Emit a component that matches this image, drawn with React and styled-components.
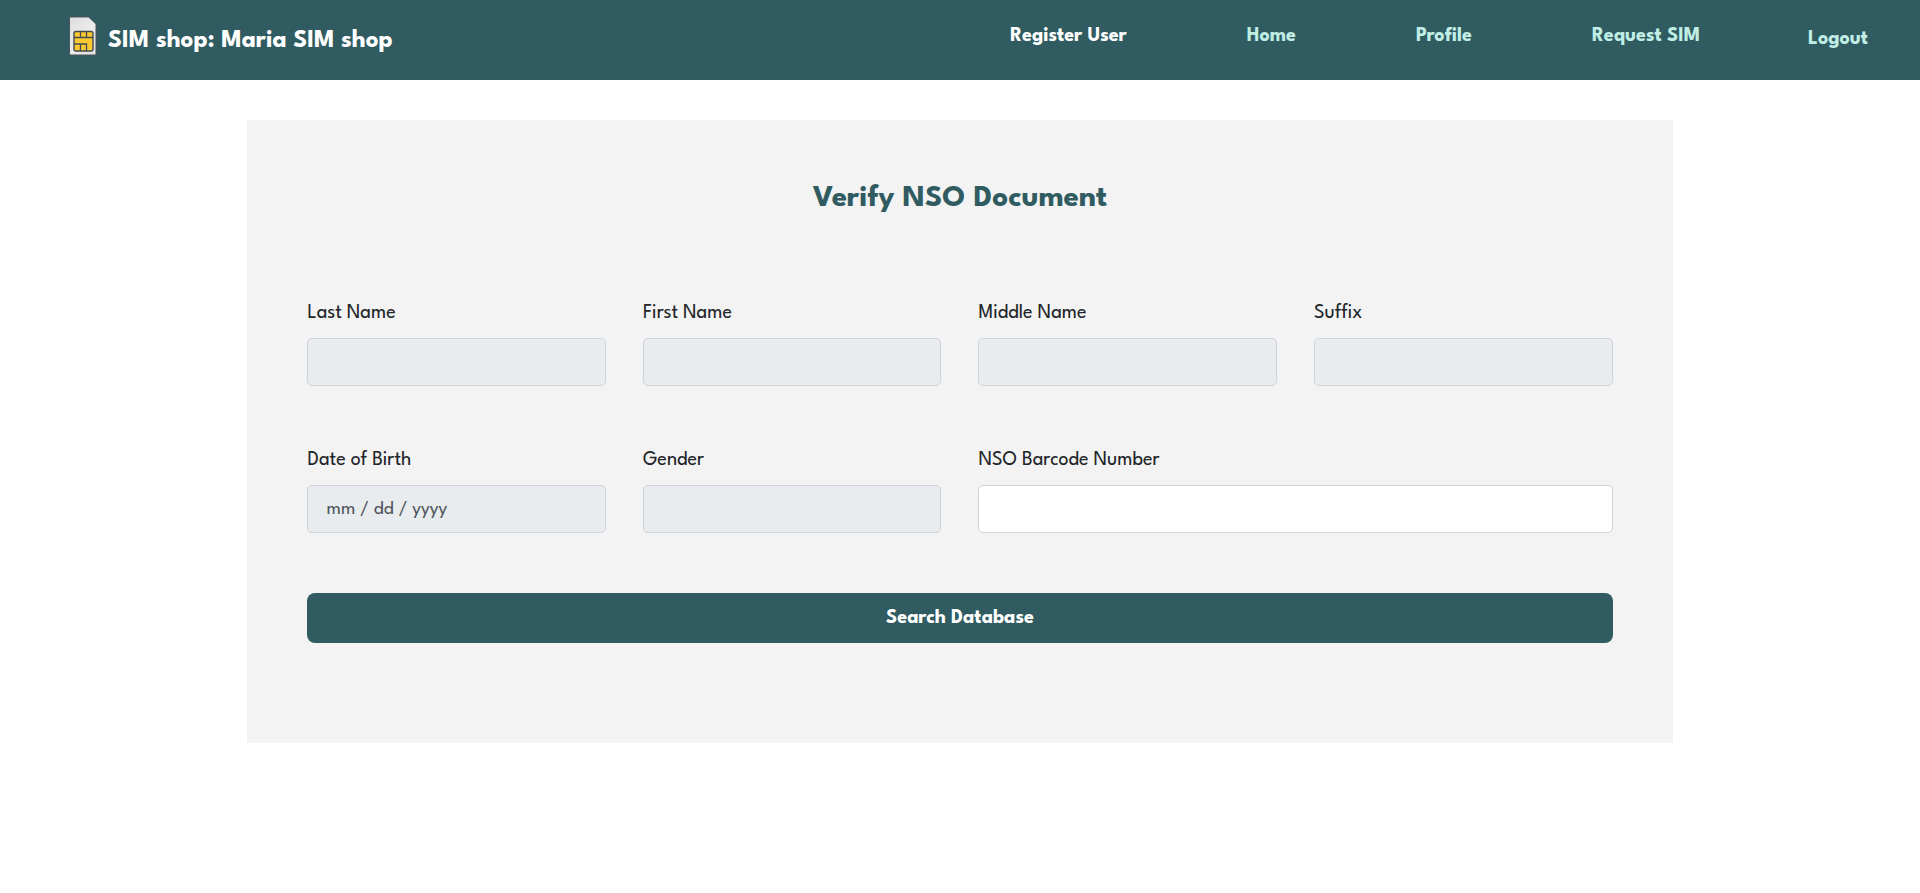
import React from "react";
import styled, { createGlobalStyle, ThemeProvider } from "styled-components";

const theme = {
  teal: "#2f5b61",
  mint: "#c0ede4",
  panel: "#f3f3f3",
  border: "#ced4da",
  disabled: "#e8ecef",
  ink: "#212529",
};

const GlobalStyle = createGlobalStyle`
  *, *::before, *::after { box-sizing: border-box; }
  body {
    margin: 0;
    background: #ffffff;
    color: ${theme.ink};
    font-family: "League Spartan", Lato, "Open Sans", sans-serif;
    font-size: 20px;
    line-height: 24px;
  }
`;

const Header = styled.header`
  display: flex;
  align-items: center;
  justify-content: space-between;
  min-height: 80px;
  padding: 0 52px 0 68px;
  background: ${({ theme }) => theme.teal};
`;

const Brand = styled.a`
  display: flex;
  align-items: center;
  gap: 10px;
  padding-top: 2px;
  color: #ffffff;
  font-size: 25px;
  font-weight: 700;
  text-decoration: none;
  white-space: nowrap;
`;

const BrandIcon = styled.svg`
  width: 30px;
  height: 40px;
  margin-bottom: 10px;
`;

const Nav = styled.nav`
  display: flex;
  align-items: center;
  gap: 108px;
`;

const NavList = styled.ul`
  display: flex;
  gap: 120px;
  margin: 0;
  padding: 0 0 8px;
  list-style: none;
`;

const NavLink = styled.a`
  color: ${({ theme, $active }) => ($active ? "#ffffff" : theme.mint)};
  font-size: 20px;
  font-weight: 700;
  text-decoration: none;
  white-space: nowrap;
`;

const LogoutLink = styled(NavLink)`
  padding-bottom: 2px;
`;

const Panel = styled.main`
  width: 74.22%;
  margin: 40px auto;
  padding: 60px 60px 100px;
  background: ${({ theme }) => theme.panel};
`;

const Title = styled.h1`
  margin: 0 0 81px;
  color: ${({ theme }) => theme.teal};
  font-size: 31px;
  font-weight: 700;
  line-height: 38px;
  text-align: center;
`;

const Form = styled.form`
  display: grid;
  grid-template-columns: repeat(4, minmax(0, 1fr));
  gap: 60px 37px;
`;

const Field = styled.div`
  display: flex;
  flex-direction: column;
  gap: 11px;
  grid-column: span ${({ $span }) => $span || 1};
`;

const Label = styled.label`
  line-height: 28px;
`;

const Input = styled.input`
  width: 100%;
  height: 48px;
  padding: 0 18px;
  border: 1px solid ${({ theme }) => theme.border};
  border-radius: 5px;
  background: ${({ theme, readOnly }) => (readOnly ? theme.disabled : "#ffffff")};
  color: #50565c;
  font: inherit;
  font-size: 19px;

  &::placeholder {
    color: #50565c;
    opacity: 1;
  }
`;

const SubmitButton = styled.button`
  grid-column: 1 / -1;
  height: 50px;
  border: 0;
  border-radius: 8px;
  background: ${({ theme }) => theme.teal};
  color: #ffffff;
  font: inherit;
  font-weight: 700;
  cursor: pointer;
`;

const links = [
  { label: "Register User", active: true },
  { label: "Home" },
  { label: "Profile" },
  { label: "Request SIM" },
];

const fields = [
  { id: "last-name", label: "Last Name", readOnly: true },
  { id: "first-name", label: "First Name", readOnly: true },
  { id: "middle-name", label: "Middle Name", readOnly: true },
  { id: "suffix", label: "Suffix", readOnly: true },
  { id: "birth-date", label: "Date of Birth", readOnly: true, placeholder: "mm / dd / yyyy" },
  { id: "gender", label: "Gender", readOnly: true },
  { id: "barcode", label: "NSO Barcode Number", span: 2 },
];

function SimCardIcon() {
  return (
    <BrandIcon viewBox="0 0 30 40" aria-hidden="true">
      <defs>
        <linearGradient id="card" x1="0" y1="0" x2="1" y2="1">
          <stop offset="0" stopColor="#dddddd" />
          <stop offset="0.5" stopColor="#ebebeb" />
          <stop offset="1" stopColor="#e2e2e2" />
        </linearGradient>
      </defs>
      <path d="M2.500 1H20.500L28 8V37.500Q28 39 26.500 39H3Q1.500 39 1.500 37.500V2Q1.500 1 2.500 1Z" fill="url(#card)" stroke="#4b565b" strokeWidth="1" />
      <rect x="6" y="15.500" width="19" height="19.500" rx="2" fill="#fbc931" stroke="#414b50" strokeWidth="1.400" />
      <path d="M6 21.500H25M12.500 16V21.500M18.500 16V21.500M6 28H18.500V35M12.500 28V35" fill="none" stroke="#414b50" strokeWidth="1.300" />
    </BrandIcon>
  );
}

export default function App() {
  return (
    <ThemeProvider theme={theme}>
      <GlobalStyle />
      <Header>
        <Brand href="#">
          <SimCardIcon />
          SIM shop: Maria SIM shop
        </Brand>
        <Nav>
          <NavList>
            {links.map(({ label, active }) => (
              <li key={label}>
                <NavLink href="#" $active={active}>{label}</NavLink>
              </li>
            ))}
          </NavList>
          <LogoutLink href="#">Logout</LogoutLink>
        </Nav>
      </Header>
      <Panel>
        <Title>Verify NSO Document</Title>
        <Form onSubmit={(event) => event.preventDefault()}>
          {fields.map(({ id, label, span, ...input }) => (
            <Field key={id} $span={span}>
              <Label htmlFor={id}>{label}</Label>
              <Input id={id} type="text" {...input} />
            </Field>
          ))}
          <SubmitButton type="submit">Search Database</SubmitButton>
        </Form>
      </Panel>
    </ThemeProvider>
  );
}
